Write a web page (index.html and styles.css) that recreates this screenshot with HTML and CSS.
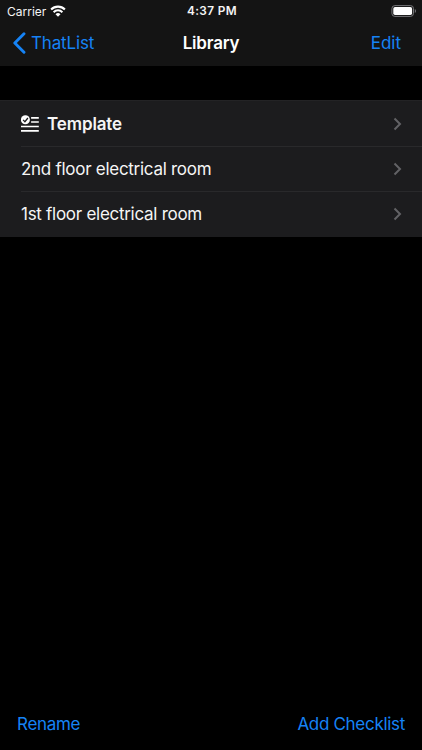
FILE: index.html
```html
<!DOCTYPE html>
<html lang="en">
<head>
  <meta charset="UTF-8">
  <meta name="viewport" content="width=device-width, initial-scale=1.0">
  <title>Library</title>
  <link rel="stylesheet" href="styles.css">
</head>
<body>
  <header class="header">
    <div class="status-bar">
      <div class="carrier">
        <span>Carrier</span>
        <svg class="wifi" width="16" height="12" viewBox="0 0 16 12">
          <path d="M1.1 4.5a9.8 9.8 0 0 1 13.8 0" fill="none" stroke="#fff" stroke-width="2.1"/>
          <path d="M3.6 7.2a6.2 6.2 0 0 1 8.8 0" fill="none" stroke="#fff" stroke-width="2"/>
          <path d="M8 11.8L5.5 9.2a3.6 3.6 0 0 1 5 0z" fill="#fff"/>
        </svg>
      </div>
      <span class="time">4:37 PM</span>
      <svg class="battery" width="26" height="12" viewBox="0 0 26 12">
        <rect x="0.9" y="0.6" width="21.6" height="10.8" rx="3" fill="none" stroke="#77777a" stroke-width="1"/>
        <rect x="2.3" y="2" width="18.8" height="8" rx="1.7" fill="#fff"/>
        <path d="M23.8 4v4c1.6-.6 1.6-3.4 0-4z" fill="#77777a"/>
      </svg>
    </div>
    <nav class="nav-bar">
      <a class="back" href="#">
        <svg width="14" height="22" viewBox="0 0 14 22">
          <path d="M12 1.7L2.8 11l9.200 9.300" fill="none" stroke="#1683f5" stroke-width="2.900" stroke-linecap="round" stroke-linejoin="round"/>
        </svg>
        <span>ThatList</span>
      </a>
      <h1>Library</h1>
      <a class="edit" href="#">Edit</a>
    </nav>
  </header>

  <main class="content">
    <ul class="list">
      <li class="row template">
        <svg class="list-icon" width="19" height="18" viewBox="0 0 19 18">
          <circle cx="4.4" cy="4.8" r="4.5" fill="#fff"/>
          <path d="M2.1 4.9l1.8 1.8 3-3.700" fill="none" stroke="#1c1c1e" stroke-width="1.3"/>
          <path d="M10.1 2.900h7.700M10.100 7h7.700M0 11.500h17.800M0 15.900h17.800" stroke="#fff" stroke-width="1.700"/>
        </svg>
        <span class="name template-name">Template</span>
        <svg class="chevron" width="9" height="14" viewBox="0 0 9 14">
          <path d="M1.5 1.5L7 7l-5.500 5.500" fill="none" stroke="#626265" stroke-width="2"/>
        </svg>
      </li>
      <li class="row">
        <span class="name">2nd floor electrical room</span>
        <svg class="chevron" width="9" height="14" viewBox="0 0 9 14">
          <path d="M1.5 1.5L7 7l-5.500 5.500" fill="none" stroke="#626265" stroke-width="2"/>
        </svg>
      </li>
      <li class="row">
        <span class="name">1st floor electrical room</span>
        <svg class="chevron" width="9" height="14" viewBox="0 0 9 14">
          <path d="M1.5 1.5L7 7l-5.500 5.500" fill="none" stroke="#626265" stroke-width="2"/>
        </svg>
      </li>
    </ul>
  </main>

  <footer class="toolbar">
    <a class="rename" href="#">Rename</a>
    <a class="add" href="#">Add Checklist</a>
  </footer>
</body>
</html>
```

FILE: styles.css
```css
* {
  box-sizing: border-box;
}
body {
  display: flex;
  flex-direction: column;
  height: 100vh;
  margin: 0;
  background-color: #000;
  color: #f5f5f5;
  font-family: Inter, "Liberation Sans", sans-serif;
  font-size: 17px;
  overflow: hidden;
}
a {
  color: #1683f5;
  text-decoration: none;
}
svg {
  display: block;
  flex: none;
}
.header {
  height: 66px;
  background-color: #141414;
}
.status-bar {
  display: grid;
  grid-template-columns: 1fr auto 1fr;
  align-items: center;
  height: 22px;
  padding: 0 5px 0 7px;
  font-size: 12px;
}
.carrier {
  display: flex;
  align-items: center;
  gap: 4px;
}
.wifi {
  margin-bottom: 1px;
}
.time {
  font-weight: 600;
  font-size: 11.8px;
  letter-spacing: 0.4px;
}
.battery {
  justify-self: end;
  margin-bottom: 1px;
}
.nav-bar {
  display: grid;
  grid-template-columns: 1fr auto 1fr;
  align-items: center;
  height: 42px;
  padding: 0 21px 0 12px;
}
.nav-bar h1 {
  margin: 0 0 0 9px;
  font-size: 17px;
  font-weight: 600;
  letter-spacing: -0.2px;
  color: #fff;
}
.back {
  display: flex;
  align-items: center;
  gap: 5px;
  letter-spacing: -0.15px;
}
.edit {
  justify-self: end;
}
.content {
  flex: 1;
  padding-top: 34px;
}
.list {
  margin: 0;
  padding: 0 0 0 21px;
  list-style: none;
  background-color: #1c1c1e;
  border-top: 1px solid #232325;
}
.row {
  display: flex;
  align-items: center;
  height: 46px;
  padding-right: 20px;
  letter-spacing: -0.28px;
  border-bottom: 1px solid #29292b;
}
.row + .row {
  height: 45px;
}
.row:last-child {
  border-bottom-color: #1c1c1e;
}
.chevron {
  margin-left: auto;
}
.list-icon {
  margin-right: 7px;
}
.template-name {
  font-weight: 600;
  letter-spacing: -0.12px;
}
.toolbar {
  display: flex;
  justify-content: space-between;
  align-items: center;
  height: 52px;
  padding: 0 17px;
  letter-spacing: -0.3px;
}
```
